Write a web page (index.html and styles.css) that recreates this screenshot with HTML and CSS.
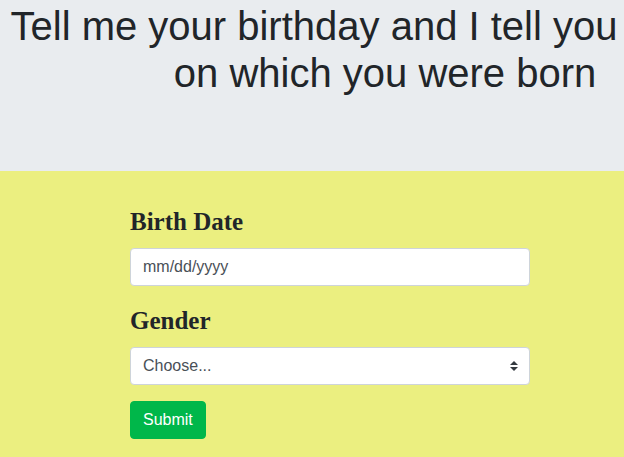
FILE: index.html
```html
<!DOCTYPE html>
<html lang="en">
<head>
<meta charset="utf-8">
<title>Birthday</title>
<link rel="stylesheet" href="styles.css">
</head>
<body>
<header class="hero">
  <h1 class="hero-title">Tell me your birthday and I tell you <span class="day-slot"></span> on which you were born</h1>
</header>
<main class="panel">
  <form class="birth-form">
    <div class="field">
      <label class="field-label" for="birth">Birth Date</label>
      <input class="control" id="birth" type="text" placeholder="mm/dd/yyyy">
    </div>
    <div class="field field-last">
      <label class="field-label" for="gender">Gender</label>
      <div class="select-wrap">
        <select class="control select" id="gender">
          <option>Choose...</option>
          <option>Male</option>
          <option>Female</option>
        </select>
        <svg class="select-arrow" width="8" height="10" viewBox="0 0 4 5"><path d="M2 0L0 2h4zm0 5L0 3h4z" fill="#343a40"/></svg>
      </div>
    </div>
    <button class="submit" type="button">Submit</button>
  </form>
</main>
</body>
</html>
```

FILE: styles.css
```css
* { box-sizing: border-box; }
html, body { margin: 0; padding: 0; }
body {
  font-family: "Liberation Sans", Arial, sans-serif;
  color: #212529;
  background: #ebef80;
  min-height: 457px;
}
.hero {
  background: #e9ecef;
  height: 171px;
  padding-top: 3px;
}
.hero-title {
  margin: 0;
  padding-left: 4px;
  font-size: 40px;
  font-weight: 400;
  line-height: 47px;
  text-align: center;
  color: #212529;
}
.day-slot {
  display: inline-block;
  width: 131px;
  height: 1px;
}
.panel {
  background: #ebef80;
  padding-top: 36px;
  padding-bottom: 20px;
}
.birth-form {
  width: 400px;
  margin-left: 130px;
}
.field { margin-bottom: 20px; }
.field-last { margin-bottom: 16px; }
.field-label {
  display: block;
  font-family: "Liberation Serif", "Times New Roman", serif;
  font-weight: 700;
  font-size: 25px;
  line-height: 30px;
  margin-bottom: 11px;
  color: #212529;
}
.control {
  display: block;
  width: 100%;
  height: 38px;
  padding: 6px 12px;
  font-family: "Liberation Sans", Arial, sans-serif;
  font-size: 16px;
  line-height: 24px;
  color: #495057;
  background: #fff;
  border: 1px solid #ced4da;
  border-radius: 4px;
  outline: none;
}
.control::placeholder { color: #495057; opacity: 1; }
.select-wrap { position: relative; }
.select {
  appearance: none;
  -webkit-appearance: none;
  padding-right: 28px;
}
.select-arrow {
  position: absolute;
  right: 12px;
  top: 14px;
  pointer-events: none;
}
.submit {
  display: block;
  margin: 0;
  height: 38px;
  padding: 6px 12px;
  font-family: "Liberation Sans", Arial, sans-serif;
  font-size: 16px;
  line-height: 24px;
  color: #fff;
  background: #00b74a;
  border: 1px solid #00b74a;
  border-radius: 4px;
}
```
